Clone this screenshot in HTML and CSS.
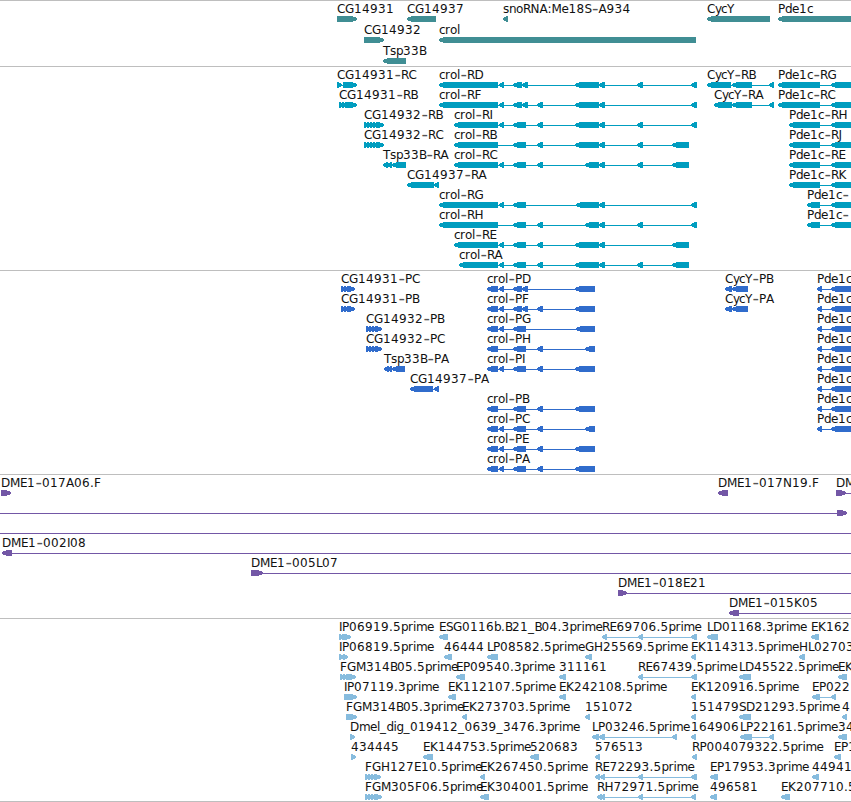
FILE: index.html
```html
<!DOCTYPE html>
<html>
<head>
    <meta charset="utf-8">
    <title>Genome region</title>
    <link rel="stylesheet" href="styles.css">
</head>
<body>
    <div class="browser">
        <svg class="track genes" id="genes"></svg>
        <svg class="track transcripts" id="transcripts"></svg>
        <svg class="track proteins" id="proteins"></svg>
        <svg class="track bacs" id="bacs"></svg>
        <svg class="track ests" id="ests"></svg>
    </div>

    <script src="tracks.js"></script>
</body>
</html>
```

FILE: styles.css
```css
body { margin: 0; background: #fff; overflow: hidden; }
.browser { display: flex; flex-direction: column; width: 851px; height: 801px; border-bottom: 1px solid #bebebe; }
.track { display: block; box-sizing: border-box; width: 851px; border-top: 1px solid #bebebe; overflow: hidden; }
.track text { font-family: "DejaVu Sans", sans-serif; font-size: 12px; fill: #111; white-space: pre; }
.track .dash { font-size: 18px; fill: #555; }
.track path { shape-rendering: crispEdges; }
.genes { height: 66px; color: #408e94; }
.transcripts { height: 204px; color: #009dbf; }
.proteins { height: 204px; color: #306ccc; }
.bacs { height: 144px; color: #7357a6; }
.ests { height: 183px; color: #87bcde; }
.box { fill: currentColor; }
.intron { fill: currentColor; }
```

FILE: tracks.js
```js
// feature: [row, x, label, strand, exons, line end (optional), line start (optional)]
const END = 860;

// run of short overlapping exons
function teeth(start, end) {
    const list = [];
    for (let x = start; x + 5 < end; x += 3) list.push([x, x + 5]);
    list.push([end - 7, end]);
    return list;
}

const s499 = [499, 504], s522 = [522, 528], s537 = [537, 543];
const s599 = [599, 605], s637 = [637, 643], s691 = [691, 697];
const e513 = [513, 526], e513s = [513, 522], e575 = [575, 599], e585 = [585, 599], e672 = [672, 689];
const p575 = [575, 595], p585 = [585, 595];
const tail = [831, END];

const tracks = {
    genes: { pitch: 21, features: [
        [0, 337, 'CG14931', '+', [[337, 357]]],
        [0, 407, 'CG14937', '-', [[407, 436]]],
        [0, 503, 'snoRNA:Me18S-A934', '-', [[503, 508]]],
        [0, 707, 'CycY', '-', [[707, 770]]],
        [0, 778, 'Pde1c', '-', [[778, END]]],
        [1, 364, 'CG14932', '+', [[364, 384]]],
        [1, 439, 'crol', '-', [[439, 696]]],
        [2, 383, 'Tsp33B', '-', [[383, 406]]]
    ] },
    transcripts: { pitch: 20, features: [
        [0, 337, 'CG14931-RC', '+', [[337, 342], [343, 348], [345, 357]]],
        [1, 339, 'CG14931-RB', '+', [[339, 344], [342, 347], [345, 357]]],
        [2, 364, 'CG14932-RB', '+', teeth(364, 384)],
        [3, 364, 'CG14932-RC', '+', teeth(364, 384)],
        [4, 383, 'Tsp33B-RA', '-', [[383, 388], [387, 392], [392, 406]]],
        [5, 407, 'CG14937-RA', '-', [[407, 434], [434, 439]]],
        [0, 439, 'crol-RD', '-', [[439, 498], s499, e513s, s522, e575, s599, s637, s691]],
        [1, 439, 'crol-RF', '-', [[439, 498], s499, e513s, s522, s537, e575, s599, s691]],
        [2, 454, 'crol-RI', '-', [[454, 498], s499, e513, s537, e575, s599, s637, s691]],
        [3, 454, 'crol-RB', '-', [[454, 498], e513, s537, e575, s599, s637, e672]],
        [4, 454, 'crol-RC', '-', [[454, 498], s499, e513, s537, e585, s599, s637, e672]],
        [6, 439, 'crol-RG', '-', [[439, 498], s499, e513, [576, 599], s599, s691]],
        [7, 439, 'crol-RH', '-', [[439, 498], e513, s537, e585, s599, s637, s691]],
        [8, 454, 'crol-RE', '-', [[454, 498], s499, e513, s537, e575, s599, e672]],
        [9, 459, 'crol-RA', '-', [[459, 498], s499, e513, s537, e575, s599, s637, e672]],
        [0, 707, 'CycY-RB', '-', [[707, 731], [732, 752], [769, 774]]],
        [1, 714, 'CycY-RA', '-', [[714, 732], [732, 752], [769, 774]]],
        [0, 778, 'Pde1c-RG', '-', [[778, 820], tail]],
        [1, 778, 'Pde1c-RC', '-', [[778, 820], tail]],
        [2, 789, 'Pde1c-RH', '-', [[789, 820], tail]],
        [3, 789, 'Pde1c-RJ', '-', [[789, 820], tail]],
        [4, 789, 'Pde1c-RE', '-', [[789, 820], tail]],
        [5, 789, 'Pde1c-RK', '-', [[789, 820], tail]],
        [6, 807, 'Pde1c-', '-', [[807, 820], tail]],
        [7, 807, 'Pde1c-', '-', [[807, 820], tail]]
    ] },
    proteins: { pitch: 20, features: [
        [0, 341, 'CG14931-PC', '+', teeth(341, 355)],
        [1, 341, 'CG14931-PB', '+', teeth(341, 355)],
        [2, 366, 'CG14932-PB', '+', teeth(366, 382)],
        [3, 366, 'CG14932-PC', '+', teeth(366, 382)],
        [4, 384, 'Tsp33B-PA', '-', [[384, 389], [387, 392], [392, 405]]],
        [5, 410, 'CG14937-PA', '-', [[410, 433], [434, 439]]],
        [0, 487, 'crol-PD', '-', [[487, 498], s499, e513s, s522, p575]],
        [1, 487, 'crol-PF', '-', [[487, 498], s499, e513s, s522, s537, p575]],
        [2, 487, 'crol-PG', '-', [[487, 498], s499, e513, [576, 595]]],
        [3, 487, 'crol-PH', '-', [[487, 498], e513, s537, p585]],
        [4, 487, 'crol-PI', '-', [[487, 498], s499, e513, s537, p575]],
        [6, 487, 'crol-PB', '-', [[487, 498], e513, s537, p575]],
        [7, 487, 'crol-PC', '-', [[487, 498], s499, e513, s537, p585]],
        [8, 487, 'crol-PE', '-', [[487, 498], s499, e513, s537, p575]],
        [9, 487, 'crol-PA', '-', [[487, 498], s499, e513, s537, p575]],
        [0, 725, 'CycY-PB', '-', [[725, 732], [732, 748]]],
        [1, 725, 'CycY-PA', '-', [[725, 732], [732, 748]]],
        ...[0, 1, 2, 3, 4, 5, 6, 7].map(row => [row, 817, 'Pde1c', '-', [[817, 822], tail]])
    ] },
    bacs: { pitch: 20, features: [
        [0, 1, 'DME1-017A06.F', '+', [[1, 11]]],
        [0, 718, 'DME1-017N19.F', '-', [[718, 728]]],
        [0, 836, 'DM', '+', [[836, 846]], END],
        [1, 0, '', '+', [[837, 847]], 837, 0],
        [2, 0, '', '+', [], END, 0],
        [3, 2, 'DME1-002I08', '-', [[2, 12]], END],
        [4, 251, 'DME1-005L07', '+', [[251, 263]], END],
        [5, 618, 'DME1-018E21', '+', [[618, 627]], END],
        [6, 729, 'DME1-015K05', '-', [[729, 739]], END]
    ] },
    ests: { pitch: 20, features: [
        [0, 339, 'IP06919.5prime', '+', teeth(339, 351)],
        [0, 439, 'ESG0116b.B21_B04.3prime', '-', [[439, 448]]],
        [0, 602, 'RE69706.5prime', '-', [[602, 607], [638, 643], [691, 697]]],
        [0, 707, 'LD01168.3prime', '-', [[707, 718]]],
        [0, 811, 'EK162', '-', [[811, 819]]],
        [1, 339, 'IP06819.5prime', '+', [[339, 344], [343, 348]]],
        [1, 444, '46444', '-', [[444, 452]]],
        [1, 487, 'LP08582.5prime', '-', [[487, 498]]],
        [1, 585, 'GH25569.5prime', '-', [[585, 592]]],
        [1, 691, 'EK114313.5prime', '-', [[691, 696]]],
        [1, 799, 'HL02703', '-', [[799, 805]]],
        [2, 340, 'FGM314B05.5prime', '+', [[340, 345], [343, 348], [346, 356]]],
        [2, 456, 'EP09540.3prime', '-', [[456, 465]]],
        [2, 559, '311161', '-', [[559, 566]]],
        [2, 638, 'RE67439.5prime', '-', [[638, 643], [691, 697]]],
        [2, 739, 'LD45522.5prime', '-', [[739, 751]]],
        [2, 838, 'EK', '-', [[838, 847]]],
        [3, 344, 'IP07119.3prime', '+', [[344, 349], [346, 357]]],
        [3, 448, 'EK112107.5prime', '-', [[448, 456]]],
        [3, 559, 'EK242108.5prime', '-', [[559, 566]]],
        [3, 691, 'EK120916.5prime', '-', [[691, 696]]],
        [3, 812, 'EP022', '-', [[812, 820], [831, 836]]],
        [4, 346, 'FGM314B05.3prime', '+', [[346, 357]]],
        [4, 462, 'EK273703.5prime', '-', [[462, 467]]],
        [4, 585, '151072', '-', [[585, 590]]],
        [4, 691, '151479', '-', [[691, 696]]],
        [4, 739, 'SD21293.5prime', '-', [[739, 751]]],
        [4, 842, '4', '-', [[842, 847]]],
        [5, 350, 'Dmel_dig_019412_0639_3476.3prime', '+', [[350, 355]]],
        [5, 592, 'LP03246.5prime', '-', [[592, 599], [599, 605], [672, 677]]],
        [5, 691, '164906', '-', [[691, 696]]],
        [5, 740, 'LP22161.5prime', '-', [[740, 752], [769, 774]]],
        [5, 838, '34', '-', [[838, 847]]],
        [6, 351, '434445', '+', [[351, 356]]],
        [6, 423, 'EK144753.5prime', '-', [[423, 433]]],
        [6, 530, '520683', '-', [[530, 539]]],
        [6, 595, '576513', '-', [[595, 600]]],
        [6, 692, 'RP004079322.5prime', '-', [[692, 697]]],
        [6, 834, 'EP1', '-', [[834, 841]]],
        [7, 365, 'FGH127E10.5prime', '+', teeth(365, 381)],
        [7, 480, 'EK267450.5prime', '-', [[480, 485]]],
        [7, 595, 'RE72293.5prime', '-', [[595, 600], [600, 605], [638, 643], [691, 697]]],
        [7, 710, 'EP17953.3prime', '-', [[710, 718]]],
        [7, 812, '44941', '-', [[812, 819]]],
        [8, 365, 'FGM305F06.5prime', '+', teeth(365, 382)],
        [8, 480, 'EK304001.5prime', '-', [[480, 489]]],
        [8, 597, 'RH72971.5prime', '-', [[597, 602], [600, 605], [638, 643], [691, 696]]],
        [8, 710, '496581', '-', [[710, 717]]],
        [8, 781, 'EK207710.5', '-', [[781, 790]]]
    ] }
};

// label glyph advances in px
const advance = {
    A: 8, B: 7, C: 8, D: 9, E: 7, F: 7, G: 9, H: 9, I: 3, J: 4, K: 8, L: 6, M: 10, N: 9, P: 7, R: 7.5, S: 7, T: 7, Y: 7,
    b: 7, c: 6, d: 7, e: 7, g: 7, i: 3, l: 3, m: 11, n: 7, o: 7, p: 7, r: 5, s: 6, y: 6, '.': 4, ':': 4, '-': 7, _: 6.5
};

function el(parent, name, attrs) {
    const node = document.createElementNS('http://www.w3.org/2000/svg', name);
    for (const key in attrs) node.setAttribute(key, attrs[key]);
    parent.appendChild(node);
    return node;
}

// exon box with a blunt 2px tip, short exons get a shorter head
function arrow(start, end, y, strand) {
    const head = end - start < 7 ? 4 : 5;
    if (strand === '-') {
        return `M${start} ${y + 2}L${start + head} ${y}H${end}V${y + 6}H${start + head}L${start} ${y + 4}Z`;
    }
    return `M${start} ${y}V${y + 6}H${end - head}L${end} ${y + 4}V${y + 2}L${end - head} ${y}Z`;
}

for (const id in tracks) {
    const svg = document.getElementById(id);
    for (const [row, x, label, strand, exons, lineEnd, lineStart] of tracks[id].features) {
        const y = 15 + row * tracks[id].pitch;
        const from = lineStart !== undefined ? lineStart : exons[0][0] + 2;
        const to = lineEnd !== undefined ? lineEnd : exons[exons.length - 1][1];
        if (exons.length > 1 || lineEnd !== undefined) {
            el(svg, 'path', { class: 'intron', d: `M${from} ${y + 3}H${to}V${y + 4}H${from}Z` });
        }
        if (exons.length) {
            el(svg, 'path', { class: 'box', d: exons.map(e => arrow(e[0], e[1], y, strand)).join('') });
        }
        if (label) {
            let pos = x;
            const xs = [], ys = [];
            for (const ch of label) {
                xs.push(ch === '-' ? pos + 0.5 : pos);
                // the dash is set larger, so it drops a little
                ys.push(ch === '-' ? y - 2 : y - 3);
                pos += advance[ch] || 8;
            }
            const text = el(svg, 'text', { x: xs.join(' '), y: ys.join(' ') });
            for (const part of label.split(/(-)/)) {
                if (part === '-') el(text, 'tspan', { class: 'dash' }).textContent = part;
                else text.append(part);
            }
        }
    }
}
```
